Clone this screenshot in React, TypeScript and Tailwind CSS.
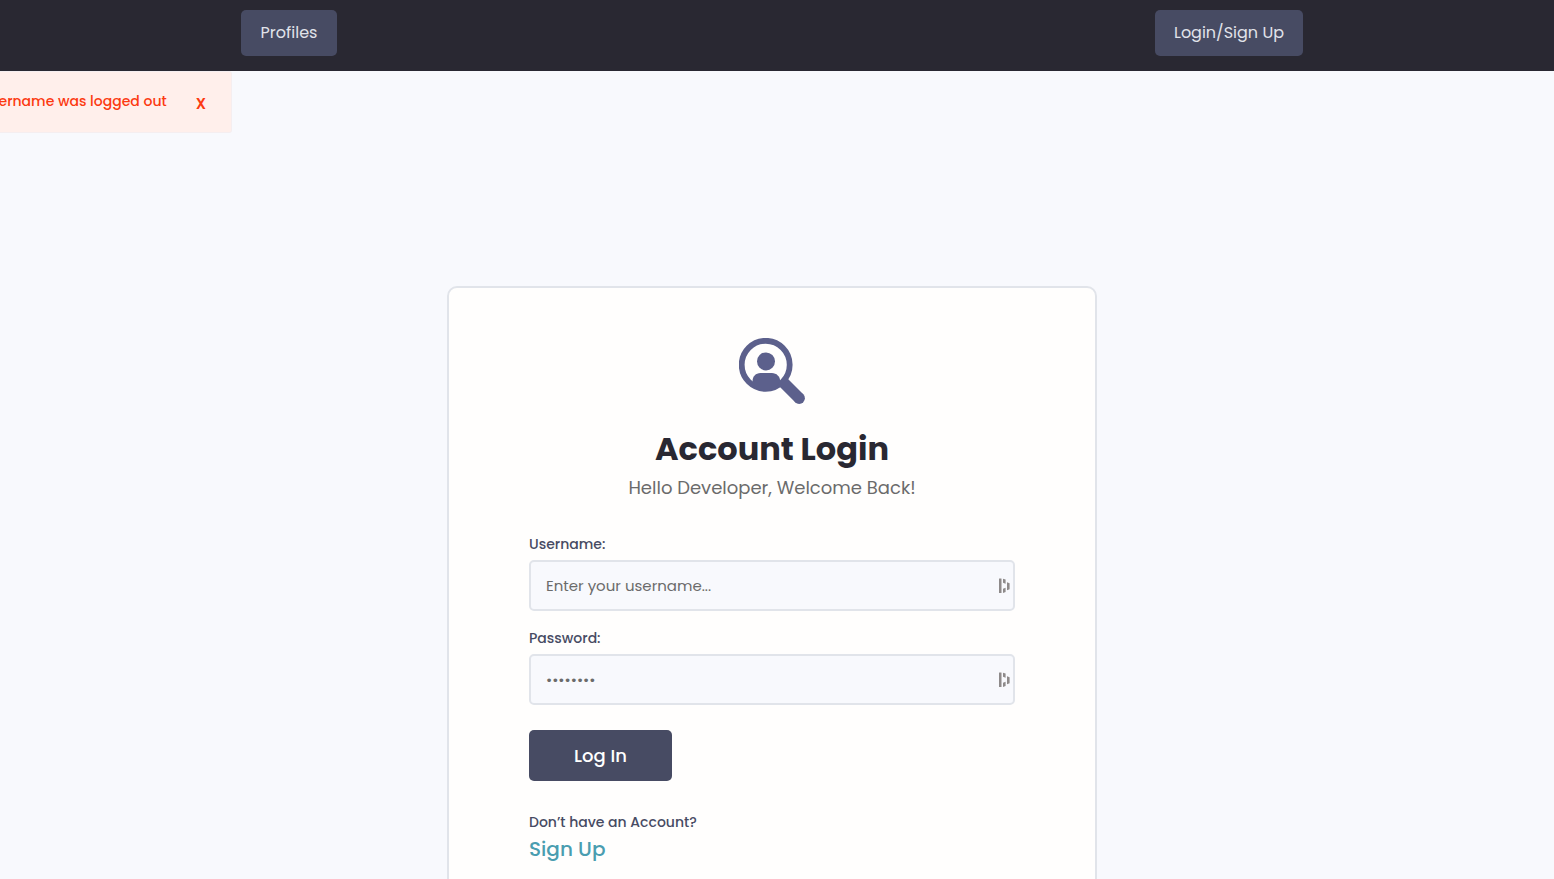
import React from 'react';

function SearchUserIcon() {
  return (
    <svg className="h-[67px] w-[67px]" viewBox="0 0 67 67" fill="none" aria-hidden="true">
      <circle cx="26.7" cy="26.8" r="24" stroke="#5c608c" strokeWidth="5.8" />
      <circle cx="27" cy="23.4" r="9" fill="#5c608c" />
      <path
        d="M13.500 43.500c0-5 3.200-8.500 8-8.500h11.400c4.600 0 8.300 3.500 8.300 8.500l-5 6.500c-6 3.200-13 3.200-19 0z"
        fill="#5c608c"
      />
      <path d="M43 43 60.200 60.200" stroke="#5c608c" strokeWidth="11.4" />
      <circle cx="60.200" cy="60.200" r="5.7" fill="#5c608c" />
    </svg>
  );
}

function FillIcon() {
  return (
    <svg className="h-4 w-3" viewBox="0 0 12 16" fill="#8e8a8a" aria-hidden="true">
      <rect x="0" y="0.500" width="2.500" height="14.500" rx="0.300" />
      <path d="M4 0.800l2.600 0.800v4.200L4 4.800zM4 10.800l2.600-1v4.300L4 15zM8 4.200l2.600 1v6L8 12.200z" />
    </svg>
  );
}

type FieldProps = {
  id: string;
  label: string;
  type: string;
  placeholder: string;
};

function Field({ id, label, type, placeholder }: FieldProps) {
  return (
    <div>
      <label htmlFor={id} className="block text-[14px] leading-[22px] font-medium text-[#474b63]">
        {label}
      </label>
      <div className="mt-[5px] flex h-[51px] items-center rounded-[5px] border-2 border-[#e1e4ea] bg-[#f8f9fd] pr-[2px] pl-[15px]">
        <input
          id={id}
          type={type}
          placeholder={placeholder}
          className="h-full min-w-0 flex-1 bg-transparent text-[15px] text-[#696d75] outline-none placeholder:text-[#6b6b6b]"
        />
        <FillIcon />
      </div>
    </div>
  );
}

export default function App() {
  return (
    <div className="h-screen overflow-y-auto bg-[#f8f9fd] font-['Poppins','Inter',sans-serif] [scrollbar-width:none]">
      <header className="bg-[#292832] pt-[10px] pr-[10px] pb-[15px]">
        <nav className="mx-auto flex max-w-[1062px] items-center justify-between">
          <a
            href="#profiles"
            className="flex h-[46px] w-24 items-center justify-center rounded-[5px] bg-[#474b63] text-[16px] text-[#e1e3ea]"
          >
            Profiles
          </a>
          <a
            href="#login"
            className="flex h-[46px] w-[148px] items-center justify-center rounded-[5px] bg-[#474b63] text-[16px] text-[#e1e3ea]"
          >
            Login/Sign Up
          </a>
        </nav>
      </header>

      <div
        role="alert"
        className="flex h-[62px] w-[232px] items-center justify-end overflow-hidden rounded-r-[3px] border border-l-0 border-[#f5eef0] bg-[#ffefeb] pr-[25px] pb-[2px] font-medium whitespace-nowrap text-[#fc3a11]"
      >
        <p className="shrink-0 text-[14px] leading-5">Username was logged out</p>
        <button type="button" aria-label="Dismiss" className="mt-[6px] ml-[29px] text-[15px] leading-5 font-semibold">
          X
        </button>
      </div>

      <main className="pt-[153px] pr-[10px] pb-20">
        <section className="mx-auto max-w-[650px] rounded-[10px] border-2 border-[#e1e4ea] bg-[#fffefd] px-20 pt-[50px] pb-[50px]">
          <div className="flex flex-col items-center text-center">
            <SearchUserIcon />
            <h1 className="mt-[20px] text-[32px] leading-[48px] font-bold text-[#292832]">Account Login</h1>
            <p className="text-[18px] leading-[30px] text-[#6b6b6b]">Hello Developer, Welcome Back!</p>
          </div>

          <form className="mt-[30px]" onSubmit={(event) => event.preventDefault()}>
            <div className="flex flex-col gap-4">
              <Field id="username" label="Username:" type="text" placeholder="Enter your username..." />
              <Field id="password" label="Password:" type="password" placeholder="••••••••" />
            </div>
            <button
              type="submit"
              className="mt-[25px] flex h-[51px] w-[143px] items-center justify-center rounded-[5px] bg-[#474b63] text-[18px] font-medium text-white"
            >
              Log In
            </button>
          </form>

          <div className="mt-[30px]">
            <p className="text-[14px] leading-[22px] font-medium text-[#474b63]">Don’t have an Account?</p>
            <a href="#signup" className="text-[20px] leading-8 font-medium text-[#4a9db0]">
              Sign Up
            </a>
          </div>
        </section>
      </main>
    </div>
  );
}
